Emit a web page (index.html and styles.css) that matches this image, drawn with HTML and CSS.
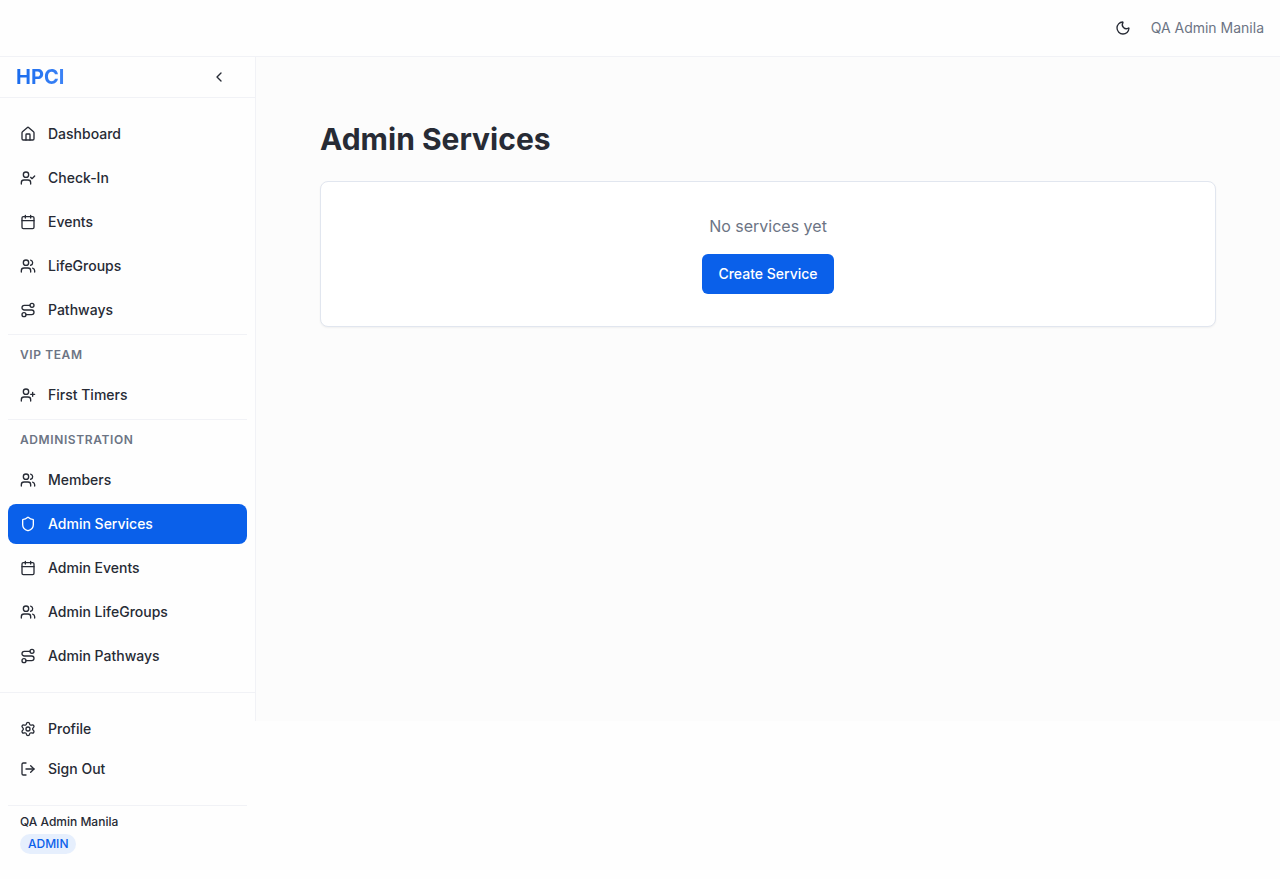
FILE: index.html
```html
<!DOCTYPE html>
<html lang="en">
<head>
<meta charset="utf-8">
<meta name="viewport" content="width=device-width, initial-scale=1">
<title>Admin Services</title>
<link rel="stylesheet" href="styles.css">
</head>
<body>
<svg class="sprite" aria-hidden="true">
  <symbol id="home" viewBox="0 0 24 24"><path d="M15 21v-8a1 1 0 0 0-1-1h-4a1 1 0 0 0-1 1v8"/><path d="M3 10a2 2 0 0 1 .709-1.528l7-5.999a2 2 0 0 1 2.582 0l7 5.999A2 2 0 0 1 21 10v9a2 2 0 0 1-2 2H5a2 2 0 0 1-2-2z"/></symbol>
  <symbol id="user-check" viewBox="0 0 24 24"><path d="m16 11 2 2 4-4"/><path d="M16 21v-2a4 4 0 0 0-4-4H6a4 4 0 0 0-4 4v2"/><circle cx="9" cy="7" r="4"/></symbol>
  <symbol id="user-plus" viewBox="0 0 24 24"><path d="M16 21v-2a4 4 0 0 0-4-4H6a4 4 0 0 0-4 4v2"/><circle cx="9" cy="7" r="4"/><path d="M19 8v6M22 11h-6"/></symbol>
  <symbol id="calendar" viewBox="0 0 24 24"><path d="M8 2v4M16 2v4"/><rect x="3" y="4" width="18" height="18" rx="2"/><path d="M3 10h18"/></symbol>
  <symbol id="users" viewBox="0 0 24 24"><path d="M16 21v-2a4 4 0 0 0-4-4H6a4 4 0 0 0-4 4v2"/><path d="M16 3.128a4 4 0 0 1 0 7.744"/><path d="M22 21v-2a4 4 0 0 0-3-3.87"/><circle cx="9" cy="7" r="4"/></symbol>
  <symbol id="route" viewBox="0 0 24 24"><circle cx="6" cy="19" r="3"/><path d="M9 19h8.5a3.5 3.5 0 0 0 0-7h-11a3.5 3.5 0 0 1 0-7H15"/><circle cx="18" cy="5" r="3"/></symbol>
  <symbol id="shield" viewBox="0 0 24 24"><path d="M20 13c0 5-3.5 7.5-7.66 8.95a1 1 0 0 1-.67-.01C7.5 20.5 4 18 4 13V6a1 1 0 0 1 1-1c2 0 4.5-1.2 6.24-2.72a1.17 1.17 0 0 1 1.52 0C14.51 3.81 17 5 19 5a1 1 0 0 1 1 1z"/></symbol>
  <symbol id="settings" viewBox="0 0 24 24"><path d="M9.671 4.136a2.34 2.34 0 0 1 4.659 0 2.34 2.34 0 0 0 3.319 1.915 2.34 2.34 0 0 1 2.33 4.033 2.34 2.34 0 0 0 0 3.831 2.34 2.34 0 0 1-2.33 4.033 2.34 2.34 0 0 0-3.319 1.915 2.34 2.34 0 0 1-4.659 0 2.34 2.34 0 0 0-3.32-1.915 2.34 2.34 0 0 1-2.33-4.033 2.34 2.34 0 0 0 0-3.831A2.34 2.34 0 0 1 6.35 6.051a2.34 2.34 0 0 0 3.319-1.915"/><circle cx="12" cy="12" r="3"/></symbol>
  <symbol id="log-out" viewBox="0 0 24 24"><path d="m16 17 5-5-5-5"/><path d="M21 12H9"/><path d="M9 21H5a2 2 0 0 1-2-2V5a2 2 0 0 1 2-2h4"/></symbol>
  <symbol id="chevron-left" viewBox="0 0 24 24"><path d="m15 18-6-6 6-6"/></symbol>
  <symbol id="moon" viewBox="0 0 24 24"><path d="M20.985 12.486a9 9 0 1 1-9.473-9.472c.405-.022.617.46.402.803a6 6 0 0 0 8.268 8.268c.344-.215.825-.004.803.401"/></symbol>
</svg>

<header class="topbar">
  <button class="icon-button" type="button" aria-label="Toggle theme"><svg class="icon"><use href="#moon"/></svg></button>
  <span class="topbar-user">QA Admin Manila</span>
</header>

<div class="shell">
  <aside class="sidebar">
    <div class="sidebar-head">
      <span class="brand">HPCI</span>
      <button class="icon-button" type="button" aria-label="Collapse sidebar"><svg class="icon"><use href="#chevron-left"/></svg></button>
    </div>
    <nav class="nav" aria-label="Main">
      <a class="nav-item" href="#"><svg class="icon"><use href="#home"/></svg>Dashboard</a>
      <a class="nav-item" href="#"><svg class="icon"><use href="#user-check"/></svg>Check-In</a>
      <a class="nav-item" href="#"><svg class="icon"><use href="#calendar"/></svg>Events</a>
      <a class="nav-item" href="#"><svg class="icon"><use href="#users"/></svg>LifeGroups</a>
      <a class="nav-item" href="#"><svg class="icon"><use href="#route"/></svg>Pathways</a>
      <h2 class="nav-label">VIP Team</h2>
      <a class="nav-item" href="#"><svg class="icon"><use href="#user-plus"/></svg>First Timers</a>
      <h2 class="nav-label">Administration</h2>
      <a class="nav-item" href="#"><svg class="icon"><use href="#users"/></svg>Members</a>
      <a class="nav-item active" href="#" aria-current="page"><svg class="icon"><use href="#shield"/></svg>Admin Services</a>
      <a class="nav-item" href="#"><svg class="icon"><use href="#calendar"/></svg>Admin Events</a>
      <a class="nav-item" href="#"><svg class="icon"><use href="#users"/></svg>Admin LifeGroups</a>
      <a class="nav-item" href="#"><svg class="icon"><use href="#route"/></svg>Admin Pathways</a>
    </nav>
    <div class="sidebar-foot">
      <a class="nav-item" href="#"><svg class="icon"><use href="#settings"/></svg>Profile</a>
      <button class="nav-item" type="button"><svg class="icon"><use href="#log-out"/></svg>Sign Out</button>
      <div class="account">
        <span class="account-name">QA Admin Manila</span>
        <span class="badge">ADMIN</span>
      </div>
    </div>
  </aside>
  <main class="main">
    <h1 class="title">Admin Services</h1>
    <section class="card">
      <p class="empty">No services yet</p>
      <button class="primary" type="button">Create Service</button>
    </section>
  </main>
</div>
</body>
</html>
```
FILE: styles.css
```css
*, *::before, *::after { box-sizing: border-box; }

:root {
  --ink: #272b35;
  --muted: #6c7484;
  --blue: #0a60ea;
  --line: #f1f2f6;
}

body {
  margin: 0;
  background: #fefefe;
  color: var(--ink);
  font-family: Inter, "Liberation Sans", sans-serif;
  font-size: 14px;
  line-height: 20px;
}

h1, h2, p { margin: 0; }
button { font: inherit; color: inherit; border: 0; background: none; cursor: pointer; }
a { color: inherit; text-decoration: none; }

.sprite { display: none; }

.icon {
  width: 16px;
  height: 16px;
  flex: none;
  fill: none;
  stroke: currentColor;
  stroke-width: 2;
  stroke-linecap: round;
  stroke-linejoin: round;
}

.icon-button {
  display: grid;
  place-items: center;
  width: 40px;
  height: 40px;
  padding: 0;
  border-radius: 6px;
}

.topbar {
  display: flex;
  align-items: center;
  justify-content: flex-end;
  gap: 8px;
  padding: 8px 16px;
  border-bottom: 1px solid var(--line);
}

.topbar-user { color: var(--muted); }

.shell { display: flex; align-items: flex-start; }

.sidebar { flex: none; width: 255px; }

.sidebar-head {
  display: flex;
  align-items: center;
  justify-content: space-between;
  padding: 0 16px;
  border-bottom: 1px solid var(--line);
}

.brand {
  font-size: 20px;
  line-height: 28px;
  font-weight: 700;
  color: transparent;
  background: linear-gradient(90deg, #196bed, #3c83f6);
  -webkit-background-clip: text;
  background-clip: text;
}

.nav {
  display: flex;
  flex-direction: column;
  gap: 4px;
  padding: 16px 8px;
  border-bottom: 1px solid var(--line);
}

.nav-item {
  display: flex;
  align-items: center;
  gap: 12px;
  width: 100%;
  padding: 10px 12px;
  border-radius: 8px;
  font-weight: 500;
  text-align: left;
}

.nav-item.active { background: var(--blue); color: #fff; }

.nav-label {
  padding: 12px 12px 8px;
  border-top: 1px solid var(--line);
  color: var(--muted);
  font-size: 12px;
  line-height: 16px;
  font-weight: 600;
  letter-spacing: 0.05em;
  text-transform: uppercase;
}

.sidebar-foot { padding: 16px 8px; }

.account {
  display: flex;
  flex-direction: column;
  align-items: flex-start;
  gap: 4px;
  margin-top: 16px;
  padding: 8px 12px;
  border-top: 1px solid var(--line);
  font-size: 12px;
  line-height: 16px;
  font-weight: 500;
}

.badge {
  padding: 2px 8px;
  border-radius: 10px;
  background: #e6effd;
  color: var(--blue);
}

.main {
  flex: 1;
  min-width: 0;
  min-height: calc(100vh - 215px);
  padding: 64px;
  border-left: 1px solid var(--line);
  background: #fcfcfc;
}

.title {
  margin-bottom: 24px;
  font-size: 30px;
  line-height: 36px;
  font-weight: 700;
}

.card {
  display: flex;
  flex-direction: column;
  align-items: center;
  gap: 16px;
  padding: 32px;
  border: 1px solid #e1e6ef;
  border-radius: 8px;
  background: #fff;
  box-shadow: 0 1px 2px rgb(0 0 0 / 5%);
}

.empty { color: var(--muted); font-size: 16px; line-height: 24px; }

.primary {
  padding: 10px 16px;
  border-radius: 6px;
  background: var(--blue);
  color: #fff;
  font-weight: 500;
}
```
